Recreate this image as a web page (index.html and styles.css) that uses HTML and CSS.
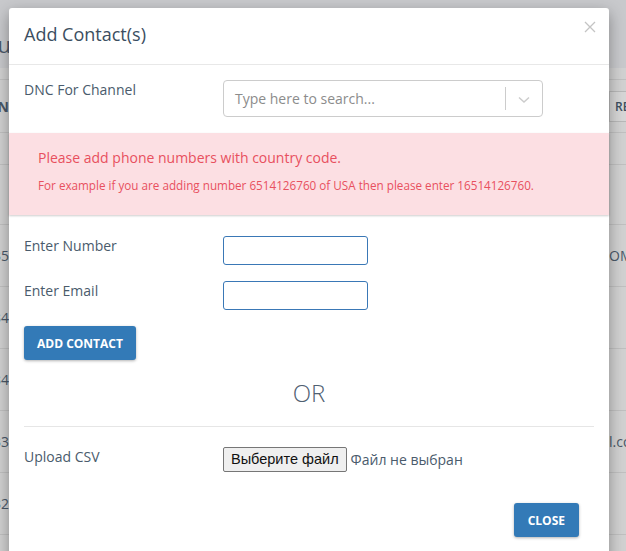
FILE: index.html
```html
<!DOCTYPE html>
<html lang="en">
<head>
  <meta charset="UTF-8">
  <meta name="viewport" content="width=device-width, initial-scale=1.0">
  <title>Add Contact(s)</title>
  <link rel="stylesheet" href="styles.css">
</head>
<body>
  <div class="page">
    <div class="page-top">
      <div class="edge-left"><span class="page-title">u</span></div>
    </div>
    <div class="page-row band"></div>
    <div class="page-row thead">
      <div class="edge-left"><b>N</b></div>
      <div class="edge-right"><span class="re-btn">RE</span></div>
    </div>
    <div class="page-row filter"></div>
    <div class="page-row first"></div>
    <div class="page-row">
      <div class="edge-left">35</div>
      <div class="edge-right">OM</div>
    </div>
    <div class="page-row">
      <div class="edge-left">34</div>
    </div>
    <div class="page-row">
      <div class="edge-left">34</div>
    </div>
    <div class="page-row">
      <div class="edge-left">33</div>
      <div class="edge-right">l.co</div>
    </div>
    <div class="page-row">
      <div class="edge-left">32</div>
    </div>
  </div>

  <div class="modal">
    <div class="modal-header">
      <h4 class="modal-title">Add Contact(s)</h4>
      <svg class="close" width="12" height="12" viewBox="0 0 12 12">
        <path d="M1 1 L11 11 M11 1 L1 11" stroke="#c4c4c4" stroke-width="1.3" fill="none"/>
      </svg>
    </div>
    <div class="modal-body">
      <div class="form-row">
        <label>DNC For Channel</label>
        <div class="select">
          <span class="placeholder">Type here to search...</span>
          <span class="sep"></span>
          <span class="arrow">
            <svg width="12" height="8" viewBox="0 0 12 8">
              <polyline points="1,1.5 6,6 11,1.5" stroke="#cccccc" stroke-width="1.5" fill="none"/>
            </svg>
          </span>
        </div>
      </div>

      <div class="alert">
        <p class="alert-main">Please add phone numbers with country code.</p>
        <p class="alert-sub">For example if you are adding number 6514126760 of USA then please enter 16514126760.</p>
      </div>

      <div class="form-row field-row">
        <label>Enter Number</label>
        <input type="text" class="text-input">
      </div>
      <div class="form-row field-row">
        <label>Enter Email</label>
        <input type="text" class="text-input">
      </div>
      <button class="btn btn-add">Add Contact</button>

      <div class="or">OR</div>
      <hr class="divider">

      <div class="form-row upload-row">
        <label>Upload CSV</label>
        <div class="file">
          <span class="file-btn">Выберите файл</span>
          <span class="file-name">Файл не выбран</span>
        </div>
      </div>

      <div class="modal-footer">
        <button class="btn btn-close">Close</button>
      </div>
    </div>
  </div>
</body>
</html>
```

FILE: styles.css
```css
body {
  margin: 0;
  padding: 0;
  font-family: "Open Sans", "Liberation Sans", sans-serif;
  background: #d1d1d1;
  overflow: hidden;
  height: 551px;
}
.page {
  color: #4a5868;
  font-size: 14px;
}
.page-top {
  height: 48px;
  padding-top: 20px;
  background: #c8c9cc;
  display: flex;
  align-items: center;
}
.page-title {
  font-size: 22px;
  margin-right: -2px;
}
.page-row {
  height: 61px;
  border-bottom: 1px solid #c0c0c0;
  display: flex;
  align-items: center;
  justify-content: space-between;
}
.page-row.band {
  height: 11px;
}
.page-row.thead {
  height: 52px;
}
.page-row.filter {
  height: 31px;
}
.page-row.first {
  height: 59px;
}
.edge-left {
  width: 9px;
  overflow: hidden;
  display: flex;
  justify-content: flex-end;
  white-space: nowrap;
}
.edge-right {
  width: 17px;
  overflow: hidden;
  white-space: nowrap;
  margin-left: auto;
}
.re-btn {
  display: inline-block;
  border: 1px solid #b8b8b8;
  padding: 6px 5px;
  font-size: 12px;
  font-weight: 600;
  color: #3d4f60;
  background: #d6d6d6;
}

.modal {
  position: absolute;
  left: 9px;
  top: 8px;
  width: 600px;
  height: 560px;
  background: #fff;
  border-radius: 3px;
  box-shadow: 0 5px 15px rgba(0, 0, 0, 0.35);
  color: #4a5b6c;
  font-size: 14px;
}
.modal-header {
  padding: 12px 15px 15px;
  border-bottom: 1px solid #e8e8e8;
  display: flex;
  justify-content: space-between;
  align-items: flex-start;
}
.modal-title {
  margin: 0;
  font-size: 18px;
  font-weight: 400;
  line-height: 29px;
  color: #3b4e61;
}
.close {
  margin-top: 1px;
  margin-right: -2px;
}
.modal-body {
  padding: 15px 15px 0;
}
.form-row {
  display: grid;
  grid-template-columns: 199px 1fr;
  align-items: start;
}
.form-row label {
  line-height: 20px;
}
.select {
  width: 318px;
  height: 35px;
  border: 1px solid #cccccc;
  border-radius: 4px;
  display: flex;
  align-items: center;
}
.placeholder {
  flex: 1;
  padding-left: 11px;
  color: #8c8c8c;
}
.sep {
  width: 1px;
  height: 23px;
  background: #cccccc;
}
.arrow {
  width: 36px;
  display: flex;
  justify-content: center;
  padding-top: 2px;
}
.alert {
  margin: 16px -15px 0;
  padding: 15px 29px 22px;
  background: #fcdfe3;
  color: #e8505e;
  box-shadow: 0 1px 2px rgba(0, 0, 0, 0.2);
}
.alert p {
  margin: 0;
}
.alert-main {
  line-height: 20px;
  margin-bottom: 9px !important;
}
.alert-sub {
  font-size: 11.7px;
  line-height: 16px;
}
.field-row {
  margin-top: 16px;
}
.alert + .field-row {
  margin-top: 21px;
}
.text-input {
  width: 145px;
  height: 29px;
  box-sizing: border-box;
  border: 1px solid #3a78b6;
  border-radius: 3px;
  margin: 0;
  padding: 0 6px;
}
.btn {
  height: 34px;
  padding: 0 13px;
  border: none;
  border-radius: 3px;
  background: #337ab7;
  color: #fff;
  font-family: "Open Sans", "Liberation Sans", sans-serif;
  font-size: 12px;
  font-weight: 700;
  text-transform: uppercase;
  box-shadow: 0 1px 3px rgba(0, 0, 0, 0.3);
}
.btn-add {
  margin-top: 16px;
  display: block;
}
.btn-close {
  padding: 0 14px;
}
.or {
  margin-top: 20px;
  text-align: center;
  font-size: 24px;
  font-weight: 300;
  line-height: 26px;
  color: #4f6072;
}
.divider {
  margin: 20px 0 0;
  border: none;
  border-top: 1px solid #e6e6e6;
}
.upload-row {
  margin-top: 20px;
}
.file {
  display: flex;
  align-items: center;
}
.file-btn {
  height: 23px;
  line-height: 23px;
  padding: 0 7px;
  border: 1px solid #767676;
  border-radius: 2px;
  background: #efefef;
  color: #111;
  font-family: "Liberation Sans", Arial, sans-serif;
  font-size: 14.5px;
}
.file-name {
  margin-left: 4px;
}
.modal-footer {
  margin-top: 31px;
  padding-right: 15px;
  display: flex;
  justify-content: flex-end;
}
```
